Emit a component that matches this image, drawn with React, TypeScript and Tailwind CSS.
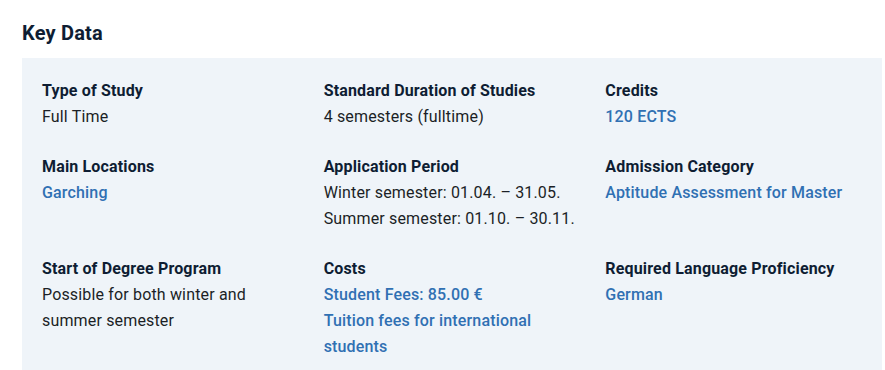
type Item = {
  label: string;
  lines: string[];
  link?: boolean;
};

const items: Item[] = [
  { label: "Type of Study", lines: ["Full Time"] },
  { label: "Standard Duration of Studies", lines: ["4 semesters (fulltime)"] },
  { label: "Credits", lines: ["120 ECTS"], link: true },
  { label: "Main Locations", lines: ["Garching"], link: true },
  {
    label: "Application Period",
    lines: ["Winter semester: 01.04. – 31.05.", "Summer semester: 01.10. – 30.11."],
  },
  { label: "Admission Category", lines: ["Aptitude Assessment for Master"], link: true },
  { label: "Start of Degree Program", lines: ["Possible for both winter and summer semester"] },
  {
    label: "Costs",
    lines: ["Student Fees: 85.00 €", "Tuition fees for international students"],
    link: true,
  },
  { label: "Required Language Proficiency", lines: ["German"], link: true },
];

export default function App() {
  return (
    <div
      className="w-[885px] h-[370px] overflow-hidden bg-white pl-[22px] pr-[3px] pt-[20px]"
      style={{ fontFamily: "Roboto, 'Liberation Sans', sans-serif" }}
    >
      <h2 className="text-[20px] leading-[26px] font-bold text-[#0e1d33] tracking-[0.2px]">Key Data</h2>
      <div className="mt-[12px] bg-[#eff4f9] pl-5 pr-[19px] pt-[20px] pb-5">
        <dl className="grid grid-cols-3 gap-x-6 gap-y-6">
          {items.map((it) => (
            <div key={it.label} className="text-[16px] leading-[26px] tracking-[0.16px]">
              <dt className="font-bold text-[#0e1d33]">{it.label}</dt>
              {it.lines.map((l) => (
                <dd
                  key={l}
                  className={
                    it.link
                      ? "font-medium text-[#3070b3] max-w-[250px]"
                      : "text-[#1b1f26] max-w-[260px]"
                  }
                >
                  {l}
                </dd>
              ))}
            </div>
          ))}
        </dl>
      </div>
    </div>
  );
}
